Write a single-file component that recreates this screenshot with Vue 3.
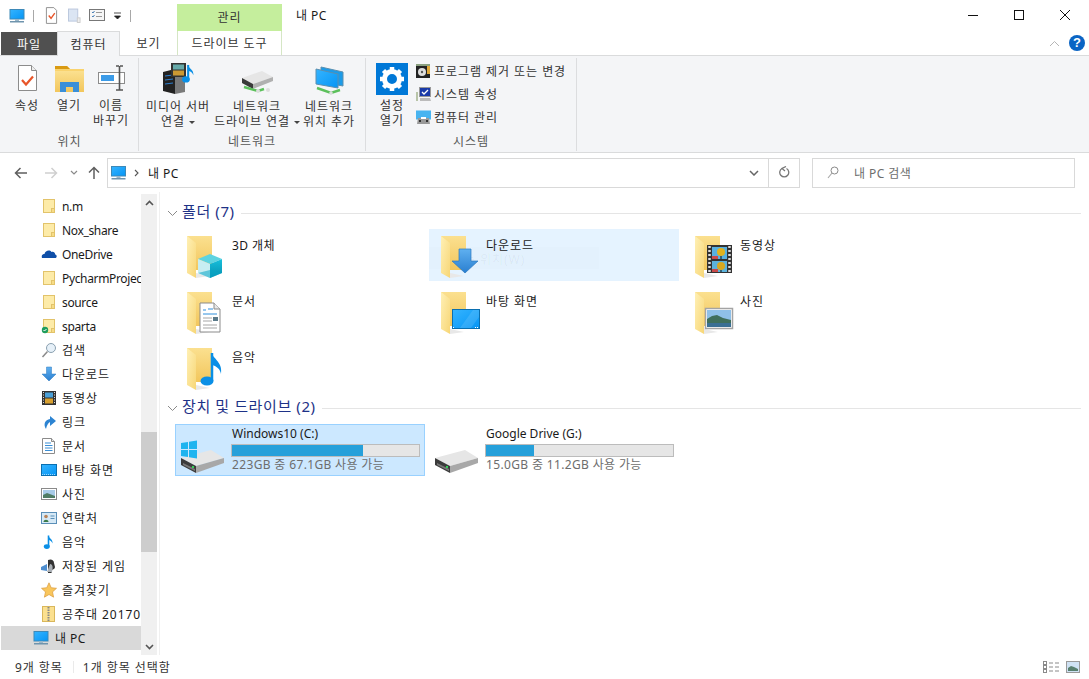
<template>
  <div class="window">
    <!-- shared icon parts -->
    <svg class="defs" width="0" height="0">
      <defs>
        <linearGradient id="gBack" x1="0" y1="0" x2="0" y2="1"><stop offset="0" stop-color="#fbe08f" /><stop offset="1" stop-color="#f2c65c" /></linearGradient>
        <linearGradient id="gFlap" x1="0" y1="0" x2="1" y2="1"><stop offset="0" stop-color="#fff0b5" /><stop offset="1" stop-color="#f7d676" /></linearGradient>
        <linearGradient id="gBlue" x1="0" y1="0" x2="0" y2="1"><stop offset="0" stop-color="#5fb0f0" /><stop offset="1" stop-color="#2a7fd0" /></linearGradient>
        <linearGradient id="gSky" x1="0" y1="0" x2="1" y2="1"><stop offset="0" stop-color="#35b4ff" /><stop offset="1" stop-color="#0595f5" /></linearGradient>
        <linearGradient id="gCube" x1="0" y1="0" x2="0" y2="1"><stop offset="0" stop-color="#18c0dc" /><stop offset="1" stop-color="#0590b0" /></linearGradient>
        <g id="pc">
          <rect x="1" y="1.500" width="14" height="9.500" fill="url(#gSky)" stroke="#3d89b8" stroke-width="1" />
          <rect x="6" y="11" width="4" height="2" fill="#9ab6c8" />
          <rect x="1" y="13" width="14" height="1.500" fill="#6f94ad" />
        </g>
        <g id="smallFolder">
          <rect x="2.500" y="1.500" width="11" height="13" fill="#fdeba8" stroke="#e2c36a" />
          <rect x="10.500" y="10.500" width="3" height="4" fill="#f7dc86" stroke="#e2c36a" />
        </g>
        <g id="arrowDown">
          <path d="M5.500 1h5v7h4.500L8 15 1 8h4.500z" fill="url(#gBlue)" stroke="#2d79bf" stroke-width=".5" />
        </g>
        <g id="film">
          <rect x="1" y="1" width="14" height="14" fill="#333" />
          <rect x="4" y="2.500" width="8" height="5" fill="#4aa0d8" />
          <rect x="4" y="8.500" width="8" height="5" fill="#d8a030" />
          <path d="M2 2.500h1M2 5h1M2 7.500h1M2 10h1M2 12.500h1M13 2.500h1M13 5h1M13 7.500h1M13 10h1M13 12.500h1" stroke="#ddd" />
        </g>
        <g id="note">
          <path d="M5.500 1.500V12.500" stroke="#0a8fe6" stroke-width="1.600" fill="none" />
          <ellipse cx="3.800" cy="12.600" rx="3" ry="2.400" fill="#0a8fe6" />
          <path d="M5.500 1.500c.6 3 4.500 3.500 4 8-.8-2.500-2.400-3.400-4-3.600z" fill="#0a8fe6" />
        </g>
        <g id="doc">
          <path d="M1.500 .5h9l3 3v12h-12z" fill="#fff" stroke="#8b8b8b" />
          <path d="M10.500 .5v3h3" fill="#e6e6e6" stroke="#8b8b8b" />
          <path d="M4 5h6M4 7.500h7.500M4 10h7.500M4 12.500h7.500" stroke="#3b8fd6" />
        </g>
        <g id="bigFolder">
          <path d="M1 0h25v34H10L1 30z" fill="url(#gBack)" />
          <path d="M1 0l9 7v35l-9-5z" fill="url(#gFlap)" />
          <path d="M10 42l14-2-14-3z" fill="#e8e8e8" />
        </g>
        <g id="ov-cube">
          <path d="M12 23l12-5 12 5-12 5z" fill="#5ed3e0" />
          <path d="M12 23l12 5v14l-12-5z" fill="#c8eef2" />
          <path d="M24 28l12-5v14l-12 5z" fill="url(#gCube)" />
          <path d="M12 37l12 5 12-5-12-3z" fill="#0aa5c6" opacity=".55" />
        </g>
        <g id="ov-doc">
          <path d="M14 11h14l6 6v23H14z" fill="#fff" stroke="#8b8b8b" />
          <path d="M28 11v6h6" fill="#e8e8e8" stroke="#8b8b8b" />
          <path d="M17 18h3M22 17h5M17 22h14" stroke="#2f8fdc" stroke-width="1" />
          <path d="M17 26h9M17 29h9M17 33h14M17 36h14" stroke="#a5a5a5" />
          <rect x="27" y="25" width="5" height="4" fill="#5a7a8a" />
        </g>
        <g id="ov-arrow">
          <path d="M19 13h12v12h7L25 37 12 25h7z" fill="url(#gBlue)" stroke="#2d79bf" stroke-width=".7" />
        </g>
        <g id="ov-film">
          <rect x="13" y="9" width="25" height="28" fill="#333" />
          <rect x="18" y="11" width="15" height="12" fill="#57b0e0" />
          <rect x="18" y="25" width="15" height="11" fill="#5cb3dc" />
          <circle cx="27" cy="16" r="4" fill="#e2b21c" />
          <circle cx="27" cy="30" r="4" fill="#d8a820" />
          <path d="M27 20v3M27 34v2" stroke="#111" />
          <path d="M18 20h6v3h-6zM18 33h6v3h-6z" fill="#c84a4a" />
          <path d="M15.500 10v26M35.500 10v26" stroke="#ddd" stroke-width="2.500" stroke-dasharray="2 2" />
        </g>
        <g id="ov-screen">
          <rect x="12.500" y="17.500" width="27" height="19" fill="url(#gSky)" stroke="#0a6fb0" />
          <path d="M20 36l13-18h6v7l-8 11z" fill="#fff" opacity=".12" />
          <path d="M35 35.500h4" stroke="#fff" stroke-dasharray="1 1" />
          <rect x="13" y="35" width="1" height="1" fill="#fff" />
        </g>
        <g id="ov-pic">
          <rect x="11.500" y="16.500" width="27" height="20" fill="#fff" stroke="#a4a4a4" stroke-width="1.500" />
          <rect x="13" y="18" width="24" height="17" fill="#8fc0e8" />
          <path d="M13 27l5-3 5-1 6 3 8 2v7H13z" fill="#3f6f5c" />
          <rect x="13" y="31" width="24" height="4" fill="#3a6f94" />
        </g>
        <g id="ov-note">
          <path d="M26 5V33" stroke="#0a8fe6" stroke-width="2.500" fill="none" />
          <ellipse cx="21" cy="33" rx="6.500" ry="4.500" fill="#0a8fe6" />
          <path d="M26 5c1 6 11 9 9 21-1-5-4-7.500-9-9z" fill="#0a8fe6" />
        </g>
        <g id="drive">
          <path d="M0 18 30 10 43 18 15 26z" fill="#e6e6e6" />
          <path d="M43 18v5L15 33v-7z" fill="#a8a8a8" />
          <path d="M0 18l15 8v7L0 25z" fill="#3b3b3b" />
          <path d="M2 23l12 6v2L2 25z" fill="#777" />
          <rect x="11" y="26" width="2" height="2" fill="#34d058" />
        </g>
      </defs>
    </svg>

    <!-- title bar -->
    <header class="titlebar">
      <div class="quick">
        <svg width="18" height="16" viewBox="0 0 16 16"><use href="#pc" /></svg>
        <span class="qsep"></span>
        <svg width="13" height="17" viewBox="0 0 14 18">
          <path d="M1.500 .5h8l3 3v14h-11z" fill="#fff" stroke="#8b8b8b" />
          <path d="M4 9l2.500 3L10.500 6.500" fill="none" stroke="#e8552a" stroke-width="1.500" />
        </svg>
        <svg class="qdoc" width="13" height="16" viewBox="0 0 14 16">
          <rect x=".5" y=".5" width="10" height="13" fill="#dbe5f3" stroke="#b9c6dc" />
          <rect x="10" y="10" width="3" height="5" fill="#eee" stroke="#ccc" />
        </svg>
        <svg width="17" height="13" viewBox="0 0 17 13">
          <rect x=".5" y=".5" width="15" height="11" fill="#f6f6f6" stroke="#777" />
          <path d="M3 3l1 1 1.500-2M3 7l1 1 1.500-2" stroke="#4a7fb5" fill="none" />
          <path d="M7 3.500h6M7 7.500h6" stroke="#999" />
        </svg>
        <svg class="qdrop" width="8" height="8" viewBox="0 0 8 8"><path d="M0 1h7M.5 4h6L3.500 7z" stroke="#222" fill="#222" stroke-width=".8" /></svg>
        <span class="qsep"></span>
      </div>
      <div class="context-head">관리</div>
      <div class="window-title narrow">내 PC</div>
      <div class="window-buttons">
        <svg width="12" height="12" viewBox="0 0 12 12"><path d="M1 6.500h10" stroke="#111" /></svg>
        <svg width="12" height="12" viewBox="0 0 12 12"><rect x="1.500" y="1.500" width="9" height="9" fill="none" stroke="#111" /></svg>
        <svg width="12" height="12" viewBox="0 0 12 12"><path d="M1 1l10 10M11 1 1 11" stroke="#111" /></svg>
      </div>
    </header>

    <!-- ribbon tabs -->
    <nav class="tabs">
      <div class="tab file">파일</div>
      <div class="tab active">컴퓨터</div>
      <div class="tab view">보기</div>
      <div class="tab tool">드라이브 도구</div>
      <div class="tabs-right">
        <svg width="11" height="7" viewBox="0 0 11 7"><path d="M1 6l4.500-4.500L10 6" fill="none" stroke="#b5b5b5" /></svg>
        <div class="help">?</div>
      </div>
    </nav>

    <!-- ribbon -->
    <section class="ribbon">
      <div class="group group-location">
        <div class="group-body">
          <div v-for="b in locationButtons" :key="b.label" class="big-btn" :class="b.cls">
            <svg width="32" height="30" viewBox="0 0 32 30" v-html="b.svg"></svg>
            <span class="btn-label">{{ b.label }}</span>
          </div>
        </div>
        <div class="group-name">위치</div>
      </div>
      <div class="group group-network">
        <div class="group-body">
          <div v-for="b in networkButtons" :key="b.label" class="big-btn" :class="b.cls">
            <svg width="36" height="32" viewBox="0 0 36 32" v-html="b.svg"></svg>
            <span class="btn-label">{{ b.label }}<i v-if="b.drop" class="caret"></i></span>
          </div>
        </div>
        <div class="group-name">네트워크</div>
      </div>
      <div class="group group-system">
        <div class="group-body">
          <div class="big-btn settings">
            <div class="gear-tile">
              <svg width="28" height="28" viewBox="0 0 28 28">
                <circle cx="14" cy="14" r="7.500" fill="none" stroke="#fff" stroke-width="5" />
                <path d="M14 14 14 2M14 14 14 26M14 14 2 14M14 14 26 14M14 14 5.500 5.500M14 14 22.500 22.500M14 14 22.500 5.500M14 14 5.500 22.500" stroke="#fff" stroke-width="4.500" stroke-dasharray="12 20" stroke-dashoffset="-7" />
              </svg>
            </div>
            <span class="btn-label">설정<br />열기</span>
          </div>
          <ul class="small-list">
            <li v-for="s in systemItems" :key="s.label">
              <svg width="16" height="16" viewBox="0 0 16 16" v-html="s.svg"></svg>
              <span>{{ s.label }}</span>
            </li>
          </ul>
        </div>
        <div class="group-name">시스템</div>
      </div>
    </section>

    <!-- address bar -->
    <div class="addressbar">
      <div class="nav-arrows">
        <svg width="14" height="12" viewBox="0 0 14 12"><path d="M13 6H2M6.500 1 1.500 6l5 5" fill="none" stroke="#5f5f5f" stroke-width="1.500" /></svg>
        <svg width="14" height="12" viewBox="0 0 14 12"><path d="M1 6h11M7.500 1l5 5-5 5" fill="none" stroke="#cfcfcf" stroke-width="1.500" /></svg>
        <svg width="8" height="6" viewBox="0 0 8 6"><path d="M1 1l3 3 3-3" fill="none" stroke="#8a8a8a" stroke-width="1.200" /></svg>
        <svg width="12" height="14" viewBox="0 0 12 14"><path d="M6 13V2M1 6.500l5-5 5 5" fill="none" stroke="#5f5f5f" stroke-width="1.500" /></svg>
      </div>
      <div class="path-box">
        <svg width="17" height="16" viewBox="0 0 16 16"><use href="#pc" /></svg>
        <svg class="crumb" width="5" height="8" viewBox="0 0 5 8"><path d="M1 1l3 3-3 3" fill="none" stroke="#555" stroke-width="1.100" /></svg>
        <span class="crumb-text narrow">내 PC</span>
        <svg class="path-drop" width="10" height="6" viewBox="0 0 10 6"><path d="M1 1l4 4 4-4" fill="none" stroke="#666" stroke-width="1.500" /></svg>
        <div class="refresh">
          <svg width="12" height="13" viewBox="0 0 12 13"><path d="M4 2.500a4.500 4.500 0 1 0 4.500 0M8 .5 4 2.500 7 5" fill="none" stroke="#777" stroke-width="1.300" /></svg>
        </div>
      </div>
      <div class="search-box">
        <svg width="12" height="13" viewBox="0 0 12 13"><circle cx="7.500" cy="4.500" r="3.500" fill="none" stroke="#8a8a8a" /><path d="M5 7 1 12" stroke="#a9a9a9" stroke-width="1.200" /></svg>
        <span class="narrow">내 PC 검색</span>
      </div>
    </div>

    <!-- main -->
    <div class="main">
      <aside class="sidebar">
        <div class="tree">
          <div v-for="row in tree" :key="row.label" class="tree-row" :class="{ selected: row.selected }">
            <svg width="16" height="16" viewBox="0 0 16 16" v-html="row.svg"></svg>
            <span class="tree-label" :class="{ latin: row.latin, narrow: row.selected }">{{ row.label }}</span>
          </div>
        </div>
        <div class="scrollbar">
          <svg class="scroll-arrow" width="9" height="6" viewBox="0 0 9 6"><path d="M1 5l3.500-3.500L8 5" fill="none" stroke="#555" stroke-width="1.600" /></svg>
          <div class="scroll-thumb"></div>
          <svg class="scroll-arrow bottom" width="9" height="6" viewBox="0 0 9 6"><path d="M1 1l3.500 3.500L8 1" fill="none" stroke="#555" stroke-width="1.600" /></svg>
        </div>
      </aside>

      <main class="content">
        <div class="section-head">
          <svg width="11" height="7" viewBox="0 0 11 7"><path d="M1 1l4.500 4.500L10 1" fill="none" stroke="#8a8a8a" /></svg>
          <span class="section-title">폴더 (7)</span>
          <span class="section-line"></span>
        </div>
        <div class="grid">
          <div v-for="f in folders" :key="f.name" class="tile" :class="{ hover: f.hover }">
            <svg class="folder-icon" width="40" height="44" viewBox="0 0 40 44">
              <use href="#bigFolder" />
              <use :href="'#ov-' + f.icon" />
            </svg>
            <span class="tile-name" :class="{ narrow: f.narrow }">{{ f.name }}</span>
            <div v-if="f.hover" class="ghost"><span>찾는 위치(W)</span></div>
          </div>
        </div>

        <div class="section-head second">
          <svg width="11" height="7" viewBox="0 0 11 7"><path d="M1 1l4.500 4.500L10 1" fill="none" stroke="#8a8a8a" /></svg>
          <span class="section-title">장치 및 드라이브 (2)</span>
          <span class="section-line"></span>
        </div>
        <div class="grid">
          <div v-for="d in drives" :key="d.name" class="drive" :class="{ selected: d.selected }">
            <svg class="drive-icon" width="44" height="34" viewBox="0 0 44 34">
              <use href="#drive" />
              <g v-if="d.selected" fill="#1fb4ef">
                <path d="M0 3l7-1v7H0zM8 1.800 16 .5V9H8zM0 10h7v7l-7-1zM8 10h8v8.500l-8-1.300z" />
              </g>
            </svg>
            <div class="drive-info">
              <div class="drive-name">{{ d.name }}</div>
              <div class="bar"><div class="bar-fill" :style="{ width: d.used + '%' }"></div></div>
              <div class="drive-free">{{ d.free }}</div>
            </div>
          </div>
        </div>
      </main>
    </div>

    <!-- status bar -->
    <footer class="statusbar">
      <span>9개 항목</span>
      <span class="status-sep"></span>
      <span>1개 항목 선택함</span>
      <div class="view-icons">
        <svg width="17" height="12" viewBox="0 0 17 12">
          <rect x=".5" y=".5" width="3" height="3" fill="#fff" stroke="#8a8a8a" />
          <rect x=".5" y="4.500" width="3" height="3" fill="#fff" stroke="#8a8a8a" />
          <rect x=".5" y="8.500" width="3" height="3" fill="#fff" stroke="#8a8a8a" />
          <path d="M6 2h4M12 2h4M6 6h4M12 6h4M6 10h4M12 10h4" stroke="#8a8a8a" />
        </svg>
        <svg width="14" height="12" viewBox="0 0 14 12">
          <rect x=".5" y=".5" width="13" height="11" fill="#cfe2f4" stroke="#9a9a9a" />
          <path d="M2 7l3-2 3 1 4 2v2H2z" fill="#58806f" />
        </svg>
      </div>
    </footer>
  </div>
</template>

<script setup>
const smallFolder = '<use href="#smallFolder" />'

const locationButtons = [
  {
    label: "속성",
    svg: '<path d="M7.500 2.500h13l5 5v20h-18z" fill="#fff" stroke="#8c8c8c" /><path d="M20.500 2.500v5h5" fill="#eee" stroke="#8c8c8c" /><path d="M11 17l4 4.500 7-8" fill="none" stroke="#e8562a" stroke-width="2.200" />',
  },
  {
    label: "열기",
    svg: '<path d="M2 3h12l3 3h14v23H2z" fill="#f9d36e" /><path d="M2 3h12l3 3H2z" fill="#d99a12" /><path d="M2 8h29v21H2z" fill="url(#gBack)" /><path d="M7 29v-10h19v10h-6v-5h-7v5z" fill="#3a8fd8" />',
  },
  {
    label: "이름\n바꾸기",
    svg: '<rect x="3.500" y="9.500" width="26" height="11" fill="#fff" stroke="#8c8c8c" /><rect x="6" y="12" width="13" height="6" fill="#3b9be8" /><path d="M21 3h3M28 3h-3M24.500 3v24M21 27h7" stroke="#555" stroke-width="1.600" fill="none" />',
  },
]

const networkButtons = [
  {
    label: "미디어 서버\n연결",
    drop: true,
    cls: "media",
    svg: '<path d="M3 9l12-3v25L3 28z" fill="#222" /><path d="M15 6l10 3v20l-10 2z" fill="#7a7a7a" /><path d="M5 13l8-1M5 17l8-1M5 21l8-1" stroke="#2d7fd0" /><rect x="11" y="0" width="15" height="14" fill="#333" /><rect x="13" y="1.500" width="11" height="5" fill="#6aa" /><rect x="13" y="7.500" width="11" height="5" fill="#c93" /><g transform="translate(21 0) scale(1.300)"><use href="#note" /></g>',
  },
  {
    label: "네트워크\n드라이브 연결",
    drop: true,
    cls: "netdrive",
    svg: '<path d="M3 15 23 8 34 14 14 21z" fill="#e6e6e6" /><path d="M34 14v4L14 26v-5z" fill="#b0b0b0" /><path d="M3 15l11 6v5L3 20z" fill="#3a3a3a" /><path d="M5 24l14 4 6-2" fill="none" stroke="#5cc05c" stroke-width="2.500" /><circle cx="19" cy="28" r="2" fill="#ddd" /><circle cx="29" cy="27" r="2" fill="#ddd" />',
  },
  {
    label: "네트워크\n위치 추가",
    cls: "netplace",
    svg: '<path d="M10 4l22 5v14l-22-4z" fill="#1c9be8" stroke="#5a8fb0" /><path d="M5 6l22 5v14L5 21z" fill="url(#gSky)" stroke="#5a8fb0" /><path d="M6 25l14 5 9-3" fill="none" stroke="#5cc05c" stroke-width="2.500" /><circle cx="20" cy="30" r="1.800" fill="#ddd" />',
  },
]

const systemItems = [
  {
    label: "프로그램 제거 또는 변경",
    svg: '<rect x="1" y="1" width="14" height="2" fill="#8aa080" /><rect x="1" y="3" width="14" height="12" fill="#222" /><rect x="12" y="3" width="3" height="8" fill="#e0a838" /><circle cx="7" cy="9" r="4" fill="#ddd" /><circle cx="7" cy="9" r="1.200" fill="#555" />',
  },
  {
    label: "시스템 속성",
    svg: '<rect x="1" y="6" width="2" height="9" fill="#b8c4a8" /><rect x="4.500" y="1.500" width="11" height="9" fill="#1a3aa8" stroke="#999" /><path d="M7 6l2 2 4-4" stroke="#fff" stroke-width="1.300" fill="none" /><path d="M5 12h10l1 3H5z" fill="#bbb" />',
  },
  {
    label: "컴퓨터 관리",
    svg: '<rect x="1" y="1.500" width="15" height="9" fill="#48b4f0" /><path d="M3 9h11l1 6H2z" fill="#999" /><rect x="6" y="8" width="5" height="2" fill="#fff" /><rect x="4" y="11" width="2" height="2" fill="#333" /><rect x="11" y="11" width="2" height="2" fill="#333" />',
  },
]

const tree = [
  { label: "n.m", svg: smallFolder, latin: true },
  { label: "Nox_share", svg: smallFolder, latin: true },
  {
    label: "OneDrive",
    latin: true,
    svg: '<path d="M1 12c-1-3 1-4 2.500-4 .5-3 5-5 7-2 2-1 4 1 3.500 2.500 2 0 2.500 3.500 0 3.500z" fill="#0f4fa8" />',
  },
  { label: "PycharmProjects", svg: smallFolder, latin: true },
  { label: "source", svg: smallFolder, latin: true },
  {
    label: "sparta",
    latin: true,
    svg: smallFolder + '<circle cx="4" cy="12" r="3.200" fill="#1f9d5e" /><path d="M2.500 12l1 1 2-2" stroke="#fff" fill="none" />',
  },
  {
    label: "검색",
    svg: '<circle cx="10" cy="6" r="4.500" fill="#e6f0f8" stroke="#8aa0b0" /><path d="M6.500 9.500 1.500 15" stroke="#8a8a8a" stroke-width="1.500" />',
  },
  { label: "다운로드", svg: '<use href="#arrowDown" />' },
  { label: "동영상", svg: '<use href="#film" />' },
  {
    label: "링크",
    svg: '<path d="M5 15C2 10 4 6 9 5V2l6 5-6 5V8c-2 1-3 3-4 7z" fill="#2d84d2" />',
  },
  { label: "문서", svg: '<use href="#doc" />' },
  {
    label: "바탕 화면",
    svg: '<rect x=".5" y="2.500" width="15" height="11" fill="url(#gSky)" stroke="#0a6fb0" /><path d="M1 12.500h14" stroke="#fff" stroke-dasharray="1 1" stroke-width=".6" />',
  },
  {
    label: "사진",
    svg: '<rect x=".5" y="2.500" width="15" height="11" fill="#fff" stroke="#8a8a8a" /><rect x="2" y="4" width="12" height="8" fill="#a8cbe8" /><path d="M2 9l4-2 8 3v2H2z" fill="#4f7c64" />',
  },
  {
    label: "연락처",
    svg: '<rect x=".5" y="2.500" width="15" height="11" fill="#d6e9f6" stroke="#5a8fb8" /><circle cx="5" cy="6.500" r="1.800" fill="#b8845a" /><path d="M2.500 12c0-3 5-3 5 0z" fill="#3a7a48" /><path d="M9.500 6h4M9.500 8.500h4" stroke="#5a8fb8" />',
  },
  { label: "음악", svg: '<g transform="translate(2 0)"><use href="#note" /></g>' },
  {
    label: "저장된 게임",
    svg: '<path d="M7 2c3-1.500 6 0 6 3l1 4c0 2-2 2-3 3l-.500 3H7z" fill="#333" /><path d="M9 6c3 0 3 4 2 8H6z" fill="#aab0b6" /><path d="M0 9l6-3v7l-6-1z" fill="#4f8fd0" />',
  },
  {
    label: "즐겨찾기",
    svg: '<path d="M8 .8l2.200 4.900 5.300.6-4 3.600 1.100 5.300L8 12.500l-4.600 2.700 1.100-5.300-4-3.600 5.300-.6z" fill="#f9c65c" stroke="#d99a3c" stroke-width=".7" />',
  },
  {
    label: "공주대 20170101",
    svg: '<rect x="1.500" y=".5" width="12" height="15" fill="#fbe08f" stroke="#d9b75c" /><path d="M7.500 1v14" stroke="#888" stroke-width="2" stroke-dasharray="1.500 1" />',
  },
  { label: "내 PC", svg: '<use href="#pc" />', selected: true },
]

const folders = [
  { name: "3D 개체", icon: "cube", narrow: true },
  { name: "다운로드", icon: "arrow", hover: true },
  { name: "동영상", icon: "film" },
  { name: "문서", icon: "doc" },
  { name: "바탕 화면", icon: "screen" },
  { name: "사진", icon: "pic" },
  { name: "음악", icon: "note" },
]

const drives = [
  { name: "Windows10 (C:)", used: 70, free: "223GB 중 67.1GB 사용 가능", selected: true },
  { name: "Google Drive (G:)", used: 25.500, free: "15.0GB 중 11.2GB 사용 가능" },
]
</script>

<style>
html,
body {
  margin: 0;
  background: #fff;
}
</style>

<style scoped>
.window {
  width: 1089px;
  height: 679px;
  display: flex;
  flex-direction: column;
  overflow: hidden;
  background: #fff;
  color: #1a1a1a;
  font-family: "Noto Sans", "Noto Sans CJK KR", sans-serif;
  font-size: 12px;
  letter-spacing: 0.95px;
}

.narrow {
  letter-spacing: 0.45px;
}

.latin {
  letter-spacing: -0.35px;
}

.defs {
  display: block;
}

.titlebar {
  height: 31px;
  flex: none;
  display: flex;
  align-items: flex-end;
}

.quick {
  width: 177px;
  height: 31px;
  box-sizing: border-box;
  padding: 0 0 0 8px;
  display: flex;
  align-items: center;
  gap: 7px;
}

.qsep {
  width: 1px;
  height: 12px;
  background: #a8a8a8;
}

.qsep + svg {
  margin-left: 4px;
}

.qdoc {
  margin-left: 3px;
}

.qdoc + svg {
  margin-left: 1px;
}

.qdrop {
  margin-left: 1px;
}

.qdrop + .qsep {
  margin-left: 1px;
}

.context-head {
  width: 105px;
  height: 27px;
  background: #c5ee9d;
  display: flex;
  align-items: center;
  justify-content: center;
  color: #333;
  padding-bottom: 1px;
  box-sizing: border-box;
}

.window-title {
  align-self: flex-start;
  margin: 7px 0 0 14px;
  line-height: 18px;
}

.window-buttons {
  align-self: flex-start;
  margin: 9px 0 0 auto;
  padding-right: 18px;
  display: flex;
  gap: 34px;
}

.tabs {
  height: 25px;
  flex: none;
  box-sizing: border-box;
  display: flex;
  padding-left: 1px;
  border-bottom: 1px solid #dadbdc;
}

.tab {
  height: 24px;
  box-sizing: border-box;
  display: flex;
  align-items: center;
  justify-content: center;
  color: #333;
}

.file {
  width: 56px;
  height: 23px;
  margin-top: 1px;
  background: #505050;
  color: #fff;
}

.active {
  width: 63px;
  height: 25px;
  background: #f4f5f7;
  border: 1px solid #dadbdc;
  border-bottom: none;
  position: relative;
}

.view {
  width: 57px;
}

.tool {
  width: 105px;
  border-left: 1px solid #d5e6c5;
  border-right: 1px solid #d5e6c5;
}

.tabs-right {
  margin-left: auto;
  padding-right: 4px;
  display: flex;
  align-items: center;
  gap: 9px;
}

.help {
  width: 16px;
  height: 16px;
  border-radius: 50%;
  background: #0a64c4;
  color: #fff;
  font-family: "Liberation Sans", sans-serif;
  font-weight: 700;
  font-size: 13px;
  line-height: 16px;
  letter-spacing: 0;
  text-align: center;
}

.ribbon {
  height: 97px;
  flex: none;
  box-sizing: border-box;
  background: #f4f5f7;
  border-bottom: 1px solid #dadbdc;
  display: flex;
  padding: 2px 0 1px 1px;
}

.group {
  display: flex;
  flex-direction: column;
  border-right: 1px solid #dcdddf;
  box-sizing: border-box;
}

.group-location {
  width: 138px;
}

.group-network {
  width: 227px;
}

.group-system {
  width: 211px;
}

.group-location .group-body {
  padding-left: 5px;
}

.group-network .group-body {
  padding-left: 7px;
}

.group-system .group-body {
  padding-left: 10px;
}

.group-body {
  flex: 1;
  display: flex;
}

.group-name {
  height: 19px;
  line-height: 19px;
  text-align: center;
  color: #555;
}

.big-btn {
  width: 42px;
  display: flex;
  flex-direction: column;
  align-items: center;
}

.big-btn svg {
  flex: none;
  margin-top: 5px;
}

.btn-label {
  margin-top: 5px;
  line-height: 15px;
  text-align: center;
  white-space: pre-line;
  color: #333;
}

.media {
  width: 64px;
}

.netdrive {
  width: 90px;
  margin-left: 2px;
}

.netplace {
  width: 56px;
  margin-left: -1px;
}

.media .btn-label,
.netdrive .btn-label,
.netplace .btn-label {
  white-space: pre;
  margin-top: 4px;
}

.caret {
  display: inline-block;
  margin-left: 4px;
  vertical-align: 2px;
  border-left: 3px solid transparent;
  border-right: 3px solid transparent;
  border-top: 3px solid #444;
}

.settings {
  width: 32px;
}

.gear-tile {
  width: 32px;
  height: 32px;
  margin-top: 5px;
  background: #0078d7;
  display: flex;
  align-items: center;
  justify-content: center;
}

.gear-tile svg {
  margin-top: 0;
}

.settings .btn-label {
  margin-top: 3px;
}

.small-list {
  list-style: none;
  margin: 3px 0 0 7px;
  padding: 0;
  display: flex;
  flex-direction: column;
  gap: 4px;
}

.small-list li {
  height: 19px;
  display: flex;
  align-items: center;
  gap: 3px;
  white-space: nowrap;
  color: #333;
}

.addressbar {
  height: 39px;
  flex: none;
  box-sizing: border-box;
  display: flex;
  align-items: center;
  padding: 0 14px 0 0;
}

.nav-arrows {
  width: 107px;
  box-sizing: border-box;
  padding-left: 14px;
  display: flex;
  align-items: center;
}

.nav-arrows svg:nth-child(2) {
  margin-left: 16px;
}

.nav-arrows svg:nth-child(3) {
  margin-left: 12px;
}

.nav-arrows svg:nth-child(4) {
  margin-left: 10px;
}

.path-box {
  width: 693px;
  height: 30px;
  box-sizing: border-box;
  border: 1px solid #d9d9d9;
  display: flex;
  align-items: center;
  padding-left: 2px;
}

.crumb {
  margin-left: 7px;
}

.crumb-text {
  margin-left: 9px;
}

.path-drop {
  margin-left: auto;
  margin-right: 9px;
}

.refresh {
  width: 30px;
  height: 100%;
  border-left: 1px solid #d9d9d9;
  display: flex;
  align-items: center;
  justify-content: center;
}

.search-box {
  width: 263px;
  height: 30px;
  margin-left: 12px;
  box-sizing: border-box;
  border: 1px solid #d9d9d9;
  display: flex;
  align-items: center;
  padding-left: 14px;
  gap: 15px;
  color: #6d6d6d;
}

.main {
  flex: 1;
  min-height: 0;
  display: flex;
}

.sidebar {
  width: 160px;
  flex: none;
  box-sizing: border-box;
  border-right: 1px solid #f0f0f0;
  display: flex;
  padding-top: 2px;
  padding-right: 2px;
}

.tree {
  width: 141px;
  flex: none;
  overflow: hidden;
}

.tree-row {
  height: 24px;
  box-sizing: border-box;
  margin-left: 1px;
  padding-left: 40px;
  display: flex;
  align-items: center;
  gap: 5px;
  white-space: nowrap;
}

.tree-row.selected {
  background: #d9d9d9;
  padding-left: 32px;
  gap: 6px;
}

.tree-row svg {
  flex: none;
}

.scrollbar {
  width: 16px;
  flex: none;
  background: #f0f0f0;
  display: flex;
  flex-direction: column;
  align-items: center;
}

.scroll-arrow {
  flex: none;
  margin-top: 6px;
}

.scroll-arrow.bottom {
  margin-top: auto;
  margin-bottom: 5px;
}

.scroll-thumb {
  width: 100%;
  height: 120px;
  margin-top: 226px;
  background: #cdcdcd;
}

.content {
  flex: 1;
  min-width: 0;
  box-sizing: border-box;
  padding: 11px 8px 0 7px;
}

.section-head {
  height: 20px;
  display: flex;
  align-items: center;
}

.section-head.second {
  margin-top: 5px;
}

.section-title {
  margin: 0 0 3px 4px;
  font-size: 15px;
  line-height: 17px;
  letter-spacing: 0.6px;
  color: #1e3287;
  white-space: nowrap;
}

.section-line {
  flex: 1;
  height: 1px;
  margin-left: 6px;
  background: #e5e5e5;
}

.grid {
  margin: 6px 0 0 8px;
  display: grid;
  grid-template-columns: repeat(3, 250px);
  grid-auto-rows: 52px;
  gap: 4px;
}

.tile {
  position: relative;
  display: flex;
  align-items: flex-start;
  padding: 7px 0 0 11px;
  box-sizing: border-box;
}

.tile.hover {
  background: #e5f3ff;
}

.folder-icon {
  flex: none;
  position: relative;
  z-index: 1;
}

.tile-name {
  margin: 2px 0 0 6px;
  line-height: 16px;
  position: relative;
  z-index: 1;
}

/* fading tooltip caught in the shot */
.ghost {
  position: absolute;
  left: 0;
  top: 18px;
  width: 170px;
  height: 22px;
  padding: 4px 0 0 23px;
  box-sizing: border-box;
  display: flex;
  align-items: center;
  background: rgba(225, 240, 252, 0.6);
  color: rgba(0, 0, 0, 0.05);
}

.ghost span {
  line-height: 10px;
}

.drive {
  display: flex;
  align-items: flex-start;
  box-sizing: border-box;
  padding: 0 5px 0 5px;
  border: 1px solid transparent;
}

.drive.selected {
  background: #cce8ff;
  border-color: #99d1ff;
}

.drive-icon {
  flex: none;
  margin-top: 15px;
}

.drive-info {
  margin-left: 7px;
  flex: 1;
  min-width: 0;
}

.drive-name {
  line-height: 18px;
  height: 19px;
  letter-spacing: 0;
}

.bar {
  width: 189px;
  height: 13px;
  box-sizing: border-box;
  background: #e6e6e6;
  border: 1px solid #bcbcbc;
  margin-left: -1px;
}

.bar-fill {
  height: 100%;
  background: #26a0da;
}

.drive-free {
  line-height: 15px;
  color: #6d6d6d;
  white-space: nowrap;
  letter-spacing: 0.35px;
}

.statusbar {
  height: 24px;
  flex: none;
  display: flex;
  align-items: center;
  padding: 0 9px 0 15px;
  color: #333;
}

.status-sep {
  width: 1px;
  height: 12px;
  background: #eaeaea;
  margin: 0 9px 0 10px;
}

.view-icons {
  margin-left: auto;
  display: flex;
  align-items: center;
  gap: 6px;
}
</style>
